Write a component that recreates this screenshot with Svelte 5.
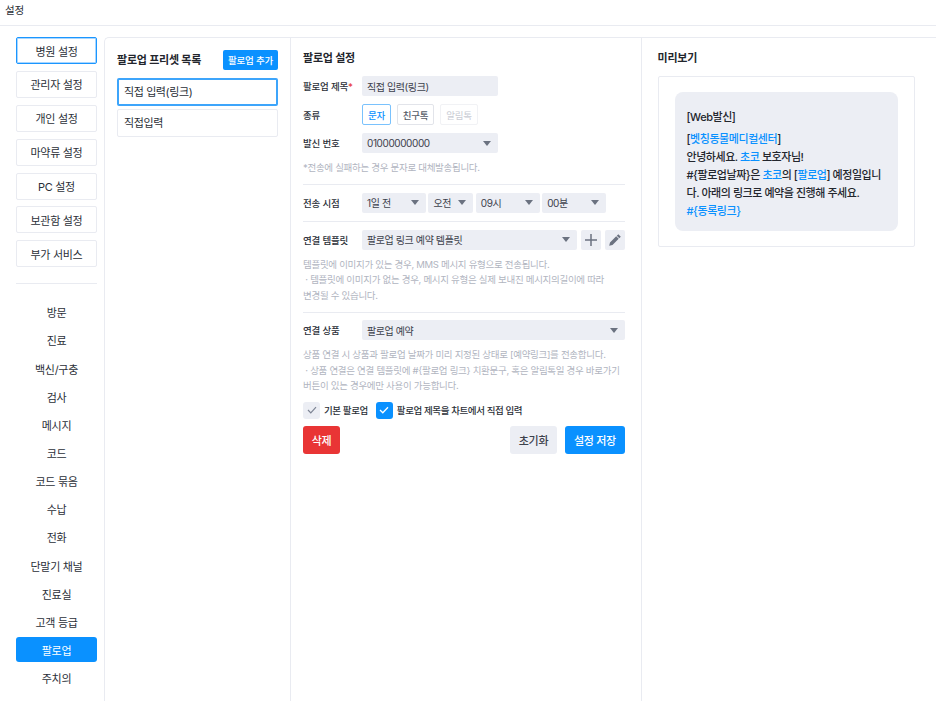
<script>
	const topMenu = ['병원 설정', '관리자 설정', '개인 설정', '마약류 설정', 'PC 설정', '보관함 설정', '부가 서비스']
	const subMenu = ['방문', '진료', '백신/구충', '검사', '메시지', '코드', '코드 묶음', '수납', '전화', '단말기 채널', '진료실', '고객 등급', '팔로업', '주치의']
</script>

{#snippet caret()}
	<svg class="caret" width="8" height="5" viewBox="0 0 8 5"><path d="M0 0h8L4 5z" fill="#6b7280" /></svg>
{/snippet}

<div class="page">
	<header>설정</header>
	<div class="body">
		<nav>
			{#each topMenu as item, i}
				<button class="top" class:focus={i === 0}>{item}</button>
			{/each}
			<hr />
			<div class="sub">
				{#each subMenu as item}
					<button class:active={item === '팔로업'}>{item}</button>
				{/each}
			</div>
		</nav>
		<main>
			<section class="presets">
				<div class="presets-head">
					<h2>팔로업 프리셋 목록</h2>
					<button class="add">팔로업 추가</button>
				</div>
				<button class="preset selected">직접 입력(링크)</button>
				<button class="preset">직접입력</button>
			</section>
			<section class="form">
				<h2>팔로업 설정</h2>
				<div class="row">
					<span class="label">팔로업 제목<i>*</i></span>
					<div class="input w136">직접 입력(링크)</div>
				</div>
				<div class="row kinds">
					<span class="label">종류</span>
					<button class="kind on">문자</button>
					<button class="kind mid">친구톡</button>
					<button class="kind off">알림톡</button>
				</div>
				<div class="row">
					<span class="label">발신 번호</span>
					<div class="input w136">01000000000 {@render caret()}</div>
				</div>
				<p class="hint">*전송에 실패하는 경우 문자로 대체발송됩니다.</p>
				<hr />
				<div class="row times">
					<span class="label">전송 시점</span>
					<div class="input w64">1일 전 {@render caret()}</div>
					<div class="input w45">오전 {@render caret()}</div>
					<div class="input w64">09시 {@render caret()}</div>
					<div class="input w64">00분 {@render caret()}</div>
				</div>
				<hr />
				<div class="row tools">
					<span class="label">연결 템플릿</span>
					<div class="input grow">팔로업 링크 예약 템플릿 {@render caret()}</div>
					<button class="icon" aria-label="추가">
						<svg width="12" height="12" viewBox="0 0 12 12"><path d="M6 0v12M0 6h12" stroke="#6b7280" stroke-width="1.5" /></svg>
					</button>
					<button class="icon" aria-label="수정">
						<svg width="12" height="12" viewBox="0 0 12 12"><path d="M9.3 0.2l2.5 2.5-1.5 1.5-2.5-2.5zM7.2 2.3l2.5 2.5-6.2 6.2L0.2 11.8 1 8.5z" fill="#6b7280" /></svg>
					</button>
				</div>
				<p class="hint">템플릿에 이미지가 있는 경우, MMS 메시지 유형으로 전송됩니다.<br />&nbsp;· 템플릿에 이미지가 없는 경우, 메시지 유형은 실제 보내진 메시지의길이에 따라<br />변경될 수 있습니다.</p>
				<hr />
				<div class="row">
					<span class="label">연결 상품</span>
					<div class="input grow">팔로업 예약 {@render caret()}</div>
				</div>
				<p class="hint">상품 연결 시 상품과 팔로업 날짜가 미리 지정된 상태로 [예약링크]를 전송합니다.<br />&nbsp;· 상품 연결은 연결 템플릿에 #&#123;팔로업 링크&#125; 치환문구, 혹은 알림톡일 경우 바로가기<br />버튼이 있는 경우에만 사용이 가능합니다.</p>
				<div class="checks">
					<span class="check"><svg width="10" height="8" viewBox="0 0 10 8"><path d="M1 4l2.8 2.8L9 1.2" fill="none" stroke="#7d8494" stroke-width="1.2" /></svg></span>
					<span class="check-label">기본 팔로업</span>
					<span class="check on"><svg width="10" height="8" viewBox="0 0 10 8"><path d="M1 4l2.8 2.8L9 1.2" fill="none" stroke="#fff" stroke-width="1.3" /></svg></span>
					<span class="check-label">팔로업 제목을 차트에서 직접 입력</span>
				</div>
				<div class="actions">
					<button class="danger">삭제</button>
					<button class="reset">초기화</button>
					<button class="save">설정 저장</button>
				</div>
			</section>
			<section class="preview">
				<h2>미리보기</h2>
				<div class="card">
					<div class="bubble">
						<p class="tag">[Web발신]</p>
						<p>[<b>벳칭동물메디컬센터</b>]<br />안녕하세요. <b>초코</b> 보호자님!<br />#&#123;팔로업날짜&#125;은 <b>초코</b>의 [<b>팔로업</b>] 예정일입니다. 아래의 링크로 예약을 진행해 주세요.<br /><b>#&#123;동록링크&#125;</b></p>
					</div>
				</div>
			</section>
		</main>
	</div>
</div>

<style>
	:global(body) {
		margin: 0;
		background: #fff;
		overflow: hidden;
	}

	.page {
		width: 936px;
		height: 701px;
		overflow: hidden;
		font-family: Inter, 'Noto Sans CJK KR', sans-serif;
		font-size: 11px;
		color: #2b2f38;
	}

	header {
		height: 26px;
		box-sizing: border-box;
		padding: 4px 5px 0;
		font-size: 10.5px;
		line-height: 13px;
		letter-spacing: -0.2px;
		border-bottom: 1px solid #e9ebf1;
	}

	.body {
		display: flex;
		padding: 11px 0 0 16px;
	}

	button {
		font: inherit;
		color: inherit;
		background: #fff;
		border: 0;
		padding: 0;
	}

	nav {
		width: 81px;
		margin-right: 7px;
		flex: none;
		display: flex;
		flex-direction: column;
	}

	.top {
		height: 27px;
		margin-bottom: 6.9px;
		box-sizing: border-box;
		border: 1px solid #e9ebf1;
		border-radius: 2px;
		letter-spacing: -0.3px;
	}

	.top.focus {
		border: 1px solid #1a96ff;
		box-shadow: 0 0 0 1px #a8d6ff inset;
	}

	nav hr {
		width: 100%;
		margin: 9px 0 15.5px;
	}

	hr {
		border: 0;
		height: 1px;
		background: #e9ebf1;
	}

	.sub {
		display: flex;
		flex-direction: column;
		gap: 3.15px;
	}

	.sub button {
		height: 25px;
		border-radius: 3px;
		letter-spacing: -0.3px;
	}

	.sub button.active {
		background: #0a91ff;
		color: #fff;
	}

	main {
		flex: 1;
		height: 680px;
		display: flex;
		border: 1px solid #e9ebf1;
		border-width: 1px 0 0 1px;
		border-top-left-radius: 5px;
	}

	h2 {
		margin: 0;
		font-size: 11px;
		font-weight: 700;
		line-height: 16px;
		letter-spacing: -0.2px;
		color: #23262d;
	}

	.presets {
		width: 186px;
		flex: none;
		box-sizing: border-box;
		padding: 12px 12px 0;
		border-right: 1px solid #e9ebf1;
	}

	.presets-head {
		display: flex;
		justify-content: space-between;
		align-items: center;
		height: 20px;
		margin-bottom: 8px;
	}

	.add {
		width: 55px;
		height: 20px;
		background: #0a91ff;
		color: #fff;
		font-size: 9.5px;
		font-weight: 500;
		letter-spacing: -0.2px;
		border-radius: 2px;
	}

	.preset {
		display: block;
		width: 161px;
		height: 28px;
		box-sizing: border-box;
		margin-bottom: 3px;
		padding: 0 6px 2px;
		text-align: left;
		letter-spacing: -0.4px;
		border: 1px solid #e9ebf1;
		border-radius: 2px;
	}

	.preset.selected {
		border: 2px solid #3da5fb;
		padding-left: 5px;
	}

	.form {
		width: 351px;
		flex: none;
		box-sizing: border-box;
		padding: 12px 16px 0 12px;
		border-right: 1px solid #e9ebf1;
	}

	.form h2 {
		margin-bottom: 10px;
	}

	.row {
		display: flex;
		align-items: center;
		height: 20px;
	}

	.label {
		width: 59px;
		flex: none;
		font-size: 9.5px;
		font-weight: 500;
		letter-spacing: -0.2px;
	}

	.label i {
		color: #e8383b;
		font-style: normal;
	}

	.input {
		height: 20px;
		box-sizing: border-box;
		display: flex;
		align-items: center;
		justify-content: space-between;
		padding: 0 7px 0 5px;
		background: #eceef4;
		border-radius: 2px;
		font-size: 10px;
		letter-spacing: -0.4px;
		color: #3c414c;
	}

	.w136 {
		width: 136px;
	}

	.w64 {
		width: 64px;
	}

	.w45 {
		width: 45px;
	}

	.grow {
		flex: 1;
	}

	.times {
		gap: 2.4px;
	}

	.times .label {
		margin-right: -2.4px;
	}

	.tools {
		gap: 3.5px;
	}

	.tools .label {
		margin-right: -3.5px;
	}

	.kinds {
		height: 21px;
		margin: 8px 0;
		gap: 6px;
	}

	.kinds .label {
		margin-right: -6px;
	}

	.kind {
		width: 29px;
		height: 21px;
		font-size: 9.5px;
		letter-spacing: -0.3px;
		border: 1px solid #7ac2fd;
		border-radius: 2px;
		color: #0a91ff;
		font-weight: 500;
	}

	.kind.mid {
		width: 37px;
		border-color: #e2e4ea;
		color: #555b67;
	}

	.kind.off {
		width: 38px;
		border-color: #f1f2f5;
		color: #c9ccd4;
		font-weight: 400;
	}

	.icon {
		width: 20.5px;
		height: 20px;
		flex: none;
		display: flex;
		align-items: center;
		justify-content: center;
		background: #eceef4;
		border-radius: 2px;
	}

	.hint {
		margin: 7px 0 0;
		font-size: 9.5px;
		line-height: 15.4px;
		letter-spacing: -0.3px;
		color: #b1b5bf;
		white-space: nowrap;
	}

	.form hr {
		margin: 8.5px 0 7.7px;
	}

	.checks {
		display: flex;
		align-items: center;
		margin-top: 8.5px;
		height: 17px;
		font-size: 9.5px;
		font-weight: 500;
		letter-spacing: -0.4px;
	}

	.check {
		width: 17px;
		height: 17px;
		display: flex;
		align-items: center;
		justify-content: center;
		background: #eceef4;
		border-radius: 3px;
	}

	.check.on {
		background: #0a91ff;
	}

	.check-label {
		margin: 0 8px 0 4px;
	}

	.actions {
		display: flex;
		gap: 8px;
		margin-top: 7.2px;
	}

	.actions button {
		height: 28px;
		border-radius: 3px;
		font-weight: 500;
		letter-spacing: -0.3px;
	}

	.danger {
		width: 37px;
		background: #e93535;
		color: #fff;
		margin-right: auto;
	}

	.actions .reset {
		width: 47px;
		background: #eceef4;
		color: #3c414c;
	}

	.save {
		width: 60px;
		background: #0a91ff;
		color: #fff;
	}

	.preview {
		flex: 1;
		box-sizing: border-box;
		padding: 12px 21px 0 15.5px;
	}

	.preview h2 {
		margin-bottom: 10px;
	}

	.card {
		box-sizing: border-box;
		height: 171px;
		padding: 15px 16px;
		border: 1px solid #e9ebf1;
		border-radius: 2px;
	}

	.bubble {
		box-sizing: border-box;
		height: 139px;
		padding: 16px 12px 0;
		background: #eceef4;
		border-radius: 8px;
		font-weight: 500;
		line-height: 18px;
		letter-spacing: -0.45px;
		word-break: break-all;
		color: #23262d;
	}

	.bubble p {
		margin: 0;
	}

	.bubble .tag {
		margin-bottom: 4px;
	}

	.bubble b {
		font-weight: 500;
		color: #0a91ff;
	}
</style>
